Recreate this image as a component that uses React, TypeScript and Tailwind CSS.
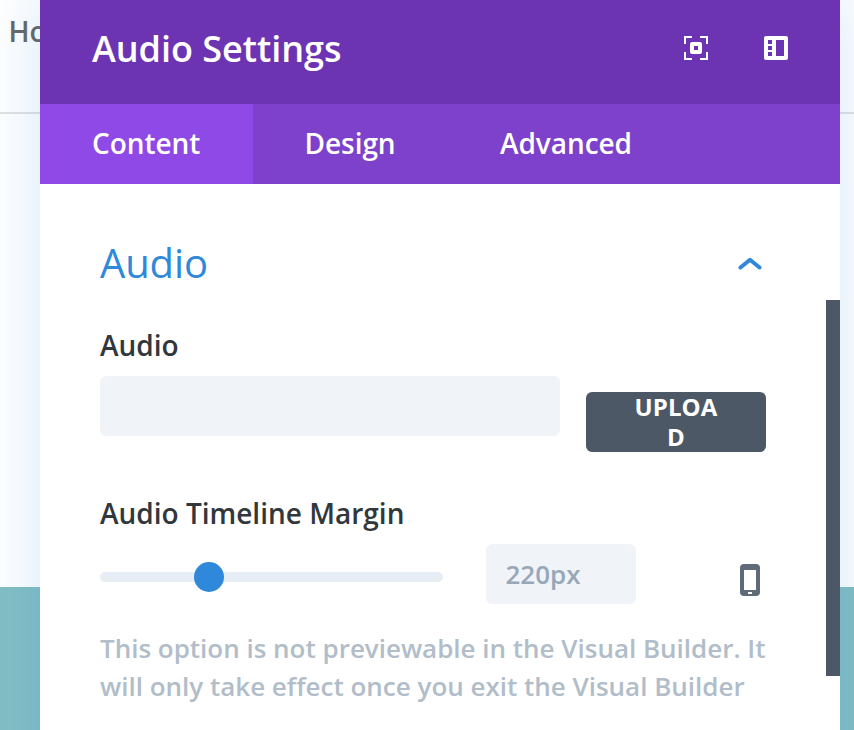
function ExpandIcon() {
  return (
    <svg width="24" height="24" viewBox="0 0 24 24" fill="none" shapeRendering="crispEdges">
      <path d="M1 8V1H8M16 1H23V8M23 16V23H16M8 23H1V16" stroke="#fff" strokeWidth="2" />
      <rect x="8" y="8" width="8" height="8" stroke="#fff" strokeWidth="4" strokeLinejoin="round" shapeRendering="auto" />
    </svg>
  );
}

function PanelIcon() {
  return (
    <svg width="24" height="24" viewBox="0 0 24 24">
      <path
        fill="#fff"
        fillRule="evenodd"
        d="M2 0H22Q24 0 24 2V22Q24 24 22 24H2Q0 24 0 22V2Q0 0 2 0ZM4 4V8H8V4ZM4 10V14H8V10ZM4 16V20H8V16ZM12 4V20H20V4Z"
      />
    </svg>
  );
}

function PhoneIcon() {
  return (
    <svg width="20" height="32" viewBox="0 0 20 32">
      <path
        fill="#5f6b78"
        fillRule="evenodd"
        d="M4 0H16Q20 0 20 4V28Q20 32 16 32H4Q0 32 0 28V4Q0 0 4 0ZM4 6V26H16V6ZM8 28V30H12V28Z"
      />
    </svg>
  );
}

const tabs = [
  { name: "Content", style: "w-[212.5px] bg-[#8e49e7]" },
  { name: "Design", style: "w-[195.5px]" },
  { name: "Advanced", style: "w-[236px]" },
];

export default function App() {
  return (
    <div className="relative h-[730px] w-[854px] overflow-hidden bg-white font-['Open_Sans',sans-serif] font-semibold">
      <header className="h-[114px] border-b-2 border-[#e2e2e2] pl-[8.5px] pt-[11px] text-[28px] leading-10 text-[#666]">
        Home
      </header>
      <div className="mt-[473px] h-[143px] bg-[#83bec4]" />

      <section className="absolute -top-5 left-10 h-[900px] w-[800px] bg-white pt-5 shadow-[0_10px_60px_rgba(43,135,218,0.2)]">
        <div className="flex h-[104px] items-start justify-between bg-[#6c34b3] pl-[52px] pr-[52px] text-white">
          <h1 className="mt-6 text-[36px] leading-[50px] font-semibold tracking-[-0.03px]">Audio Settings</h1>
          <div className="mt-9 flex gap-14">
            <ExpandIcon />
            <PanelIcon />
          </div>
        </div>
        <nav className="flex h-20 bg-[#7d41cb] text-[28px] leading-[79px] tracking-[-0.05px] text-white">
          {tabs.map((tab) => (
            <div key={tab.name} className={`pl-[52px] ${tab.style}`}>
              {tab.name}
            </div>
          ))}
        </nav>

        <div className="flex h-[546px] justify-between pl-[60px]">
          <main className="w-[666px]">
            <div className="mt-[49px] flex h-[60px] items-center justify-between">
              <h2 className="text-[40px] leading-[60px] font-normal tracking-[-0.1px] text-[#2f88d9]">Audio</h2>
              <svg width="24" height="14" viewBox="0 0 24 14" fill="none" className="mr-1">
                <path d="M2.5 11.5L12 3.7L21.5 11.5" stroke="#2f88d9" strokeWidth="4" strokeLinecap="round" strokeLinejoin="round" />
              </svg>
            </div>

            <div className="mt-[32px] text-[28px] leading-10 text-[#32373c]">Audio</div>
            <div className="mt-[11px] flex items-start justify-between">
              <div className="h-[60px] w-[460px] rounded-md bg-[#f0f3f8]" />
              <button className="mt-4 h-[60px] w-[180px] rounded-md bg-[#4c5866] px-[48px] text-[24px] leading-[30px] font-bold tracking-[0.1px] break-all text-white">
                UPLOAD
              </button>
            </div>

            <div className="mt-[41px] text-[28px] leading-10 text-[#32373c]">Audio Timeline Margin</div>
            <div className="mt-[11px] flex h-[60px]">
              <div className="mt-7 flex h-[10px] w-[343px] items-center rounded-full bg-[#e7edf5] pl-[94px]">
                <div className="size-[30px] rounded-full bg-[#2f88d9]" />
              </div>
              <div className="ml-[43px] w-[150px] rounded-md bg-[#f0f3f8] pl-[19.5px] text-[26px] leading-[60px] text-[#98a7b8]">
                220px
              </div>
              <div className="mt-5 ml-[104px]">
                <PhoneIcon />
              </div>
            </div>
            <p className="mt-[25px] text-[26px] leading-[38px] whitespace-nowrap tracking-[-0.01px] text-[#b1bdc9]">
              This option is not previewable in the Visual Builder. It
              <br />
              will only take effect once you exit the Visual Builder
            </p>
          </main>
          <div className="mt-[116px] h-[376px] w-[14px] bg-[#4c5866]" />
        </div>
      </section>
    </div>
  );
}
